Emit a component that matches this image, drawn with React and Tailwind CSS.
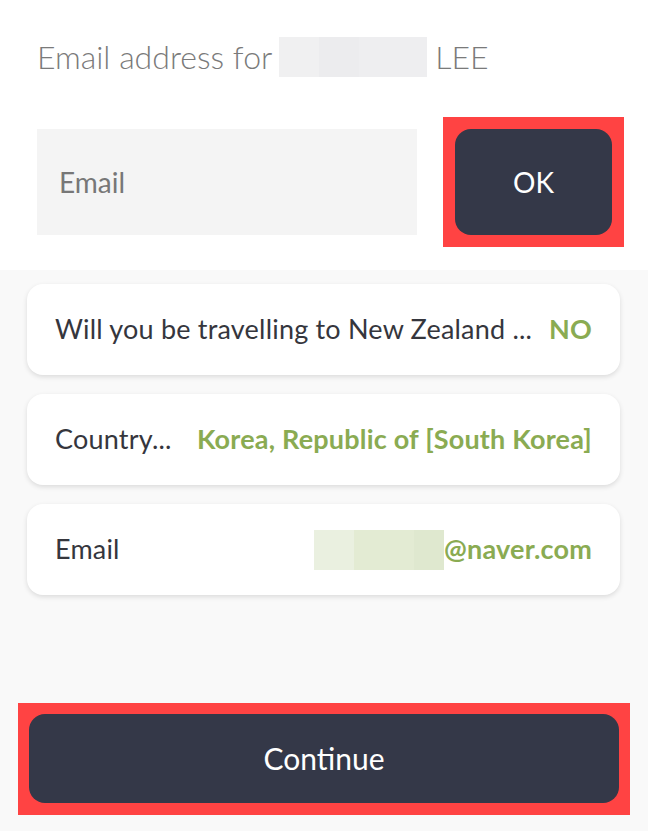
import React from "react";

const rows = [
  { label: "Will you be travelling to New Zealand ...", value: "NO" },
  { label: "Country...", value: "Korea, Republic of [South Korea]" },
  { label: "Email", value: "@naver.com", masked: true },
];

const App = () => {
  return (
    <div
      className="w-full min-h-[831px] flex flex-col bg-[#f9f9f9]"
      style={{ fontFamily: "Lato, 'Open Sans', sans-serif" }}
    >
      {/* Top: email entry */}
      <div className="bg-white h-[270px] flex flex-col">
        <div className="flex items-center h-[40px] mt-[37px] pl-[37px] text-[32px] font-light text-[#7a7a7a] leading-none">
          <span>Email address for</span>
          <span className="flex h-[40px] w-[148px] ml-[7px]">
            <span className="w-[40px] bg-[#f0f0f1]" />
            <span className="w-[40px] bg-[#ececee]" />
            <span className="flex-1 bg-[#eeeef0]" />
          </span>
          <span className="ml-[8px]">LEE</span>
        </div>

        <div className="flex items-center mt-[40px] pl-[37px]">
          <div className="w-[380px] h-[106px] bg-[#f4f4f4] flex items-center pl-[22px] text-[28px] text-[#777777]">
            Email
          </div>
          <div className="ml-[26px] bg-[#ff4343] p-[12px]">
            <button className="w-[157px] h-[106px] rounded-[16px] bg-[#343848] text-white text-[28px] flex items-center justify-center">
              OK
            </button>
          </div>
        </div>
      </div>

      {/* Summary cards */}
      <div className="flex flex-col gap-[19px] pt-[14px] pl-[27px] pr-[28px]">
        {rows.map((row) => (
          <div
            key={row.label}
            className="h-[91px] bg-white rounded-[16px] shadow-[0_2px_5px_rgba(0,0,0,0.12)] flex items-center justify-between pl-[28px] pr-[28px] text-[27px] tracking-[0.2px]"
          >
            <span className="text-[#35363d] whitespace-nowrap">{row.label}</span>
            <span className="flex items-center font-bold text-[#8aab52] whitespace-nowrap">
              {row.masked && (
                <span className="flex h-[40px] w-[130px]">
                  <span className="w-[40px] bg-[#eaf0e0]" />
                  <span className="w-[60px] bg-[#e3ebd3]" />
                  <span className="flex-1 bg-[#dfe8cf]" />
                </span>
              )}
              {row.value}
            </span>
          </div>
        ))}
      </div>

      <div className="flex-1" />

      {/* Continue */}
      <div className="mx-[18px] mb-[16px] bg-[#ff4343] p-[11px] pb-[12px]">
        <button className="w-full h-[89px] rounded-[16px] bg-[#343848] text-white text-[30px] flex items-center justify-center">
          Continue
        </button>
      </div>
    </div>
  );
};

export default App;
